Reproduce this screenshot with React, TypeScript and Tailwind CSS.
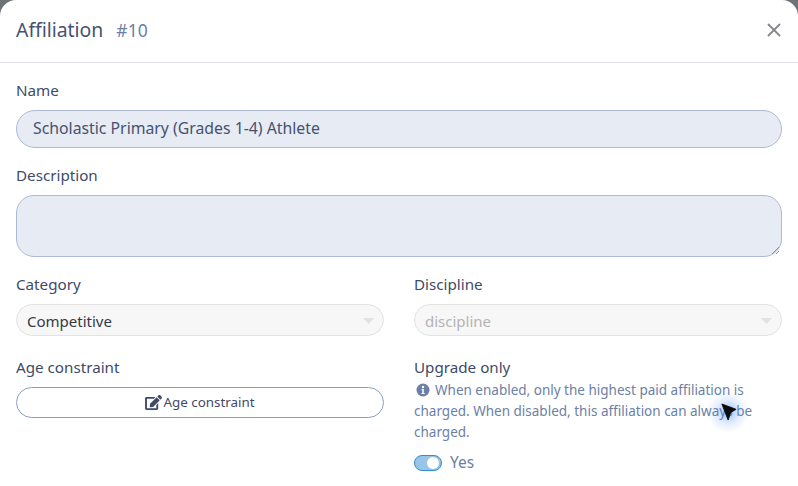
import { X } from "lucide-react";

const labelClass = "block text-[15.2px] leading-[20px] text-[#3e4a68]";

function SelectBox({ value, disabled }: { value: string; disabled?: boolean }) {
  return (
    <div className="mt-[10px] flex h-[32px] items-center justify-between rounded-full border border-[#e3e3e3] bg-[#f7f7f7] pl-[10px] pr-[9px]">
      <span className={disabled ? "pt-[3px] text-[15px] text-[#b4b4b4]" : "pt-[3px] text-[15px] text-[#333a47]"}>{value}</span>
      <svg width="11" height="6" viewBox="0 0 11 6" className="mt-[1px]">
        <path d="M0 0h11L5.5 6z" fill="#e2e2e2" />
      </svg>
    </div>
  );
}

export default function App() {
  return (
    <div className="h-[486px] w-[798px] overflow-hidden bg-[#6f7276] font-['Noto_Sans',sans-serif]">
      <div className="relative h-full w-full rounded-t-[16px] bg-white">
        {/* Header */}
        <div className="flex h-[63px] items-center justify-between border-b border-[#e1e1ea] pb-[3px] pl-[16px] pr-[13px]">
          <div className="flex items-baseline gap-[13px]">
            <span className="text-[19.4px] text-[#46526f]">Affiliation</span>
            <span className="text-[17.5px] text-[#6c7fa6]">#10</span>
          </div>
          <X className="h-[22px] w-[22px] text-[#85878c]" strokeWidth={2} />
        </div>

        {/* Form */}
        <div className="px-[16px] pt-[17px]">
          <label className={labelClass}>Name</label>
          <div className="mt-[10px] flex h-[38px] items-center rounded-full border border-[#adbad5] bg-[#e7ebf4] px-[16px] text-[15.8px] text-[#46526f]">
            Scholastic Primary (Grades 1-4) Athlete
          </div>

          <label className={`${labelClass} mt-[17px]`}>Description</label>
          <div className="relative mt-[10px] h-[62px] rounded-[18px] border border-[#adbad5] bg-[#e7ebf4]">
            <svg width="9" height="9" viewBox="0 0 9 9" className="absolute bottom-[1px] right-[1px]">
              <path d="M1 8 8 1M5 8 8 5" stroke="#777" strokeWidth="0.8" />
            </svg>
          </div>

          <div className="mt-[17px] grid grid-cols-2 gap-x-[30px]">
            <div>
              <label className={labelClass}>Category</label>
              <SelectBox value="Competitive" />
              <label className={`${labelClass} mt-[21px]`}>Age constraint</label>
              <button className="mt-[10px] flex h-[31px] w-full items-center justify-center gap-[1px] rounded-full border border-[#8d9dbf] bg-white text-[13.4px] text-[#3e4a68]">
                <svg width="17" height="15" viewBox="0 0 576 512" fill="#3e4a68">
                  <path d="M402.6 83.2l90.2 90.2c3.8 3.8 3.8 10 0 13.8L274.4 405.6l-92.8 10.3c-12.4 1.4-22.9-9.1-21.5-21.5l10.3-92.8L388.8 83.2c3.8-3.8 10-3.8 13.8 0zm162-22.9l-48.8-48.8c-15.2-15.2-39.9-15.2-55.2 0l-35.4 35.4c-3.8 3.8-3.8 10 0 13.8l90.2 90.2c3.8 3.8 10 3.8 13.8 0l35.4-35.4c15.2-15.3 15.2-40 0-55.2zM384 346.2V448H64V128h229.8c3.2 0 6.2-1.3 8.5-3.5l40-40c7.6-7.6 2.2-20.5-8.5-20.5H48C21.5 64 0 85.5 0 112v352c0 26.5 21.5 48 48 48h352c26.5 0 48-21.5 48-48V306.2c0-10.7-12.9-16-20.5-8.5l-40 40c-2.2 2.3-3.5 5.3-3.5 8.5z" />
                </svg>
                Age constraint
              </button>
            </div>

            <div>
              <label className={labelClass}>Discipline</label>
              <SelectBox value="discipline" disabled />
              <label className={`${labelClass} mt-[21px]`}>Upgrade only</label>
              <p className="mt-[3px] text-[13.5px] leading-[21px] text-[#6c7fa6]">
                <svg width="14" height="14" viewBox="0 0 14 14" className="mb-[2px] ml-[2px] mr-[5px] inline-block">
                  <circle cx="7" cy="7" r="6.5" fill="#6c7fa6" />
                  <circle cx="7" cy="4" r="1.2" fill="#fff" />
                  <path d="M5.6 6h2.2v4h.9v1H5.4v-1h.9V7h-.7z" fill="#fff" />
                </svg>
                When enabled, only the highest paid affiliation is charged. When disabled, this affiliation can always be charged.
              </p>
              <div className="mt-[8px] flex items-center gap-[8px]">
                <div className="flex h-[16px] w-[28px] items-center justify-end rounded-full border border-[#2f8fd0] bg-[#98c4e6] pr-[2px]">
                  <div className="h-[12px] w-[12px] rounded-full bg-white" />
                </div>
                <span className="text-[15.5px] text-[#6c7fa6]">Yes</span>
              </div>
            </div>
          </div>
        </div>

        {/* Recorded mouse pointer */}
        <div className="absolute left-[706px] top-[390px] h-[44px] w-[44px] rounded-full bg-[radial-gradient(circle,rgba(59,130,246,0.5)_0%,rgba(59,130,246,0.14)_38%,rgba(59,130,246,0)_68%)]" />
        <svg width="16" height="18" viewBox="0 0 18 20" className="absolute left-[721px] top-[403px]">
          <path d="M1 1 17 7l-6 3.5L8 19z" fill="#0b0b0b" stroke="#0b0b0b" strokeLinejoin="round" />
        </svg>
      </div>
    </div>
  );
}
